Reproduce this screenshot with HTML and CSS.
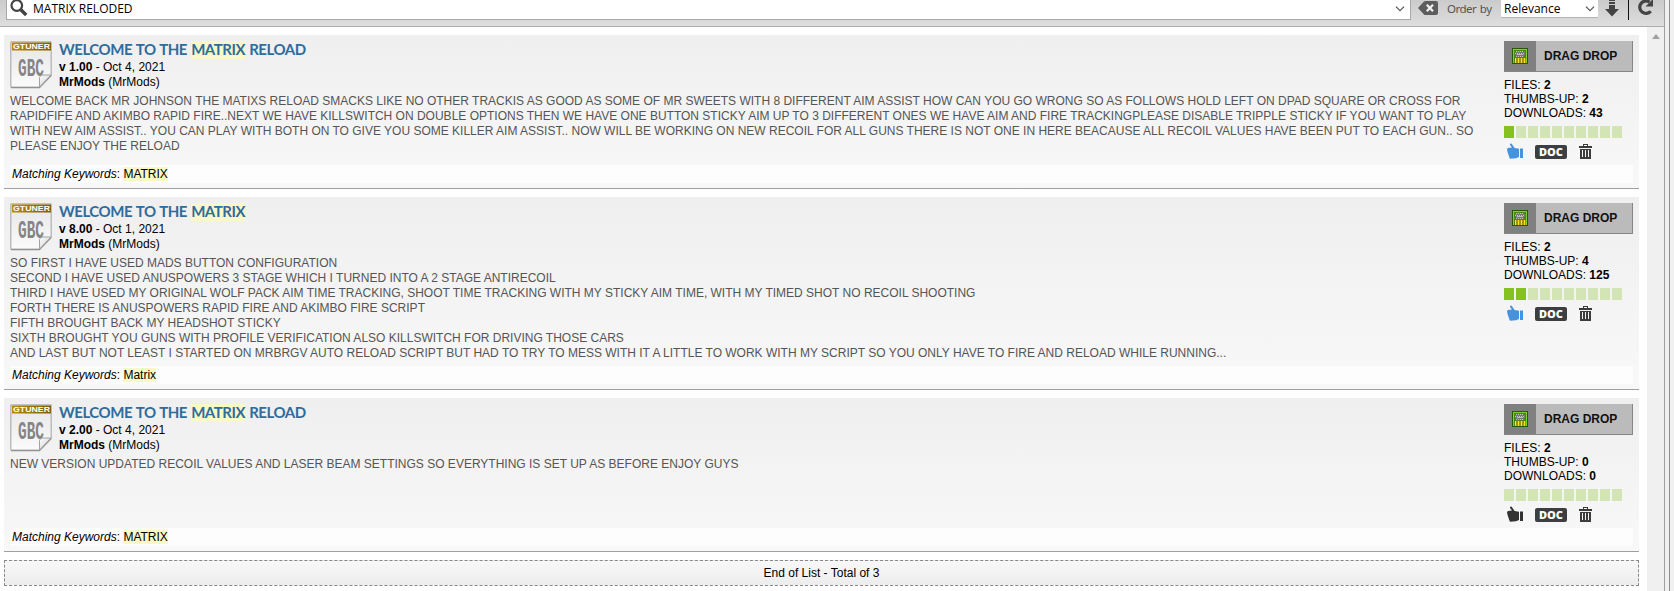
FILE: index.html
```html
<!DOCTYPE html>
<html lang="en">
<head>
<meta charset="utf-8">
<title>Library</title>
<link rel="stylesheet" href="styles.css">
</head>
<body>
<svg class="defs" width="0" height="0">
  <defs>
    <linearGradient id="paper" x1="0" y1="0" x2="0" y2="1"><stop offset="0" stop-color="#e6e6e8"/><stop offset="1" stop-color="#fbfbfb"/></linearGradient>
    <linearGradient id="gold" x1="0" y1="0" x2="1" y2="0"><stop offset="0" stop-color="#b98a0c"/><stop offset="1" stop-color="#7d6200"/></linearGradient>
    <linearGradient id="fold" x1="0" y1="0" x2="1" y2="1"><stop offset="0" stop-color="#ffffff"/><stop offset="1" stop-color="#c8c8ca"/></linearGradient>
    <symbol id="gbc" viewBox="0 0 42 48">
      <path d="M.8 1.5Q.8.8 1.5.8H40.500Q41.200.8 41.200 1.500V34L29.500 46.200H1.500Q.8 46.200.8 45.500Z" fill="url(#paper)" stroke="#b4b4b6" stroke-width="1.300"/>
      <path d="M1 46.600H29.500L41.400 34.400" fill="none" stroke="#929295" stroke-width="1.200"/>
      <rect x="2" y="1.500" width="39" height="8" fill="url(#gold)"/>
      <text x="3" y="8" class="gt" textLength="37" lengthAdjust="spacingAndGlyphs">GTUNER</text>
      <text x="8" y="34.500" class="gb" textLength="26" lengthAdjust="spacingAndGlyphs">GBC</text>
      <path d="M29.500 46V36.500Q30 34 33 34H41Z" fill="url(#fold)" stroke="#a2a2a5" stroke-width="1"/>
    </symbol>
    <symbol id="chip" viewBox="0 0 16 16" shape-rendering="crispEdges">
      <rect width="16" height="16" fill="#285800"/><rect x="1" y="1" width="14" height="14" fill="#75d829"/>
      <rect x="2" y="2" width="12" height="13" fill="#4f8412"/>
      <path d="M3 10H14V15H3Z" fill="#9c9410"/>
      <path d="M3.500 10V15M6.500 10V15M9.500 10V15M12.500 10V15" stroke="#ffe51c" stroke-width="1.600"/>
      <path d="M4 3H12V4H13V7H12V9H4V7H3V4H4Z" fill="#777"/>
      <path d="M4 3.500H12M3 5.500H13M4 8.500H12" stroke="#c5c5bd" stroke-dasharray="1 1"/>
      <path d="M5 6.500H11" stroke="#bbb"/>
    </symbol>
    <symbol id="thumb" viewBox="0 0 16 16">
      <path d="M3.200.7Q4.500.1 5.200 1.500L7.600 5L12 5.800V14L9 15.200L3 15.800L2.100 13.800L1.400 11.500L.6 9.200L0 6.300L.9 5L5 4.600L3 2Z"/><path d="M13 5.500H16V15H13Z"/>
    </symbol>
    <symbol id="trash" viewBox="0 0 13 15" shape-rendering="crispEdges">
      <path d="M4 2V0H9V2H13V4H0V2ZM5 1V2H8V1ZM1 5H12V15H1ZM3 6V13H4V6ZM6 6V13H7V6ZM9 6V13H10V6Z" fill-rule="evenodd"/>
    </symbol>
    <symbol id="chev" viewBox="0 0 10 6"><path d="M1 .7L5 4.700L9 .7" fill="none" stroke="#555" stroke-width="1.200"/></symbol>
  </defs>
</svg>
<div class="window">
  <div class="panel">
    <header class="toolbar">
      <div class="search">
        <svg class="lens" width="18" height="17" viewBox="0 0 18 17"><circle cx="6.800" cy="5.500" r="5.300" fill="none" stroke="#444" stroke-width="2.200"/><path d="M10.600 9.500L16.200 15" stroke="#444" stroke-width="3.400"/></svg>
        <span class="query">MATRIX RELODED</span>
        <svg class="chev" width="10" height="6"><use href="#chev"/></svg>
      </div>
      <svg class="clear" width="20" height="14" viewBox="0 0 20 14"><path d="M0 7L6 .6Q6.500 0 7.500 0H18Q20 0 20 2V12Q20 14 18 14H7.500Q6.500 14 6 13.400Z" fill="#5d5d5d"/><path d="M8.800 3.800L15 10.200M15 3.800L8.800 10.200" stroke="#f2f2f2" stroke-width="2.200"/></svg>
      <span class="order">Order by</span>
      <div class="select"><span>Relevance</span><svg width="10" height="6"><use href="#chev"/></svg></div>
      <svg class="down" width="14" height="18" viewBox="0 0 14 18"><path d="M4 0H10V2H4ZM4 3H10V5H4ZM4 6H10V10H14L7 17.500L0 10H4Z" fill="#444"/></svg>
      <i class="sep"></i>
      <svg class="reload" width="18" height="17" viewBox="0 0 18 17"><path d="M12.500 2.100A6.200 6.200 0 1 0 13.700 11.200" fill="none" stroke="#444" stroke-width="3.200"/><path d="M16 -1V6.500H8.500Z" fill="#444"/></svg>
    </header>
    <div class="content">
      <main class="list">
        <article class="card">
          <div class="body">
            <div class="head"><svg width="42" height="48"><use href="#gbc"/></svg><div><h2><span class="t1">WELCOME TO THE </span><mark>MATRIX</mark> RELOAD</h2><p><b>v 1.00</b> - Oct 4, 2021</p><p><b>MrMods</b> (MrMods)</p></div></div>
            <p class="desc">WELCOME BACK MR JOHNSON THE MATIXS RELOAD SMACKS LIKE NO OTHER TRACKIS AS GOOD AS SOME OF MR SWEETS WITH 8 DIFFERENT AIM ASSIST HOW CAN YOU GO WRONG SO AS FOLLOWS HOLD LEFT ON DPAD SQUARE OR CROSS FOR<br>RAPIDFIFE AND AKIMBO RAPID FIRE..NEXT WE HAVE KILLSWITCH ON DOUBLE OPTIONS THEN WE HAVE ONE BUTTON STICKY AIM UP TO 3 DIFFERENT ONES WE HAVE AIM AND FIRE TRACKINGPLEASE DISABLE TRIPPLE STICKY IF YOU WANT TO PLAY<br>WITH NEW AIM ASSIST.. YOU CAN PLAY WITH BOTH ON TO GIVE YOU SOME KILLER AIM ASSIST.. NOW WILL BE WORKING ON NEW RECOIL FOR ALL GUNS THERE IS NOT ONE IN HERE BEACAUSE ALL RECOIL VALUES HAVE BEEN PUT TO EACH GUN.. SO<br>PLEASE ENJOY THE RELOAD</p>
          </div>
          <aside class="side">
            <div class="drag"><span class="grip"><svg width="16" height="16"><use href="#chip"/></svg></span><span class="label">DRAG DROP</span></div>
            <ul class="stats"><li>FILES: <b>2</b></li><li>THUMBS-UP: <b>2</b></li><li>DOWNLOADS: <b>43</b></li></ul>
            <div class="meter"><i class="on"></i><i></i><i></i><i></i><i></i><i></i><i></i><i></i><i></i><i></i></div>
            <div class="actions"><svg class="thumb liked" width="16" height="16"><use href="#thumb"/></svg><span class="doc">DOC</span><svg class="trash" width="13" height="15"><use href="#trash"/></svg></div>
          </aside>
          <div class="keys"><em>Matching Keywords</em>: <mark>MATRIX</mark></div>
        </article>
        <article class="card">
          <div class="body">
            <div class="head"><svg width="42" height="48"><use href="#gbc"/></svg><div><h2><span class="t1">WELCOME TO THE </span><mark>MATRIX</mark></h2><p><b>v 8.00</b> - Oct 1, 2021</p><p><b>MrMods</b> (MrMods)</p></div></div>
            <p class="desc">SO FIRST I HAVE USED MADS BUTTON CONFIGURATION<br>SECOND I HAVE USED ANUSPOWERS 3 STAGE WHICH I TURNED INTO A 2 STAGE ANTIRECOIL<br>THIRD I HAVE USED MY ORIGINAL WOLF PACK AIM TIME TRACKING, SHOOT TIME TRACKING WITH MY STICKY AIM TIME, WITH MY TIMED SHOT NO RECOIL SHOOTING<br>FORTH THERE IS ANUSPOWERS RAPID FIRE AND AKIMBO FIRE SCRIPT<br>FIFTH BROUGHT BACK MY HEADSHOT STICKY<br>SIXTH BROUGHT YOU GUNS WITH PROFILE VERIFICATION ALSO KILLSWITCH FOR DRIVING THOSE CARS<br>AND LAST BUT NOT LEAST I STARTED ON MRBRGV AUTO RELOAD SCRIPT BUT HAD TO TRY TO MESS WITH IT A LITTLE TO WORK WITH MY SCRIPT SO YOU ONLY HAVE TO FIRE AND RELOAD WHILE RUNNING...</p>
          </div>
          <aside class="side">
            <div class="drag"><span class="grip"><svg width="16" height="16"><use href="#chip"/></svg></span><span class="label">DRAG DROP</span></div>
            <ul class="stats"><li>FILES: <b>2</b></li><li>THUMBS-UP: <b>4</b></li><li>DOWNLOADS: <b>125</b></li></ul>
            <div class="meter"><i class="on"></i><i class="on"></i><i></i><i></i><i></i><i></i><i></i><i></i><i></i><i></i></div>
            <div class="actions"><svg class="thumb liked" width="16" height="16"><use href="#thumb"/></svg><span class="doc">DOC</span><svg class="trash" width="13" height="15"><use href="#trash"/></svg></div>
          </aside>
          <div class="keys"><em>Matching Keywords</em>: <mark>Matrix</mark></div>
        </article>
        <article class="card">
          <div class="body">
            <div class="head"><svg width="42" height="48"><use href="#gbc"/></svg><div><h2><span class="t1">WELCOME TO THE </span><mark>MATRIX</mark> RELOAD</h2><p><b>v 2.00</b> - Oct 4, 2021</p><p><b>MrMods</b> (MrMods)</p></div></div>
            <p class="desc">NEW VERSION UPDATED RECOIL VALUES AND LASER BEAM SETTINGS SO EVERYTHING IS SET UP AS BEFORE ENJOY GUYS</p>
          </div>
          <aside class="side">
            <div class="drag"><span class="grip"><svg width="16" height="16"><use href="#chip"/></svg></span><span class="label">DRAG DROP</span></div>
            <ul class="stats"><li>FILES: <b>2</b></li><li>THUMBS-UP: <b>0</b></li><li>DOWNLOADS: <b>0</b></li></ul>
            <div class="meter"><i></i><i></i><i></i><i></i><i></i><i></i><i></i><i></i><i></i><i></i></div>
            <div class="actions"><svg class="thumb" width="16" height="16"><use href="#thumb"/></svg><span class="doc">DOC</span><svg class="trash" width="13" height="15"><use href="#trash"/></svg></div>
          </aside>
          <div class="keys"><em>Matching Keywords</em>: <mark>MATRIX</mark></div>
        </article>
        <footer class="end">End of List - Total of 3</footer>
      </main>
      <div class="scroll"><svg width="8" height="5" viewBox="0 0 8 5"><path d="M4 0L8 5H0Z" fill="#a0a0a0"/></svg></div>
    </div>
  </div>
  <div class="edge"></div>
</div>
</body>
</html>
```

FILE: styles.css
```css
* { box-sizing: border-box; }
body { margin: 0; background: #f0f0f0; font: 12px/15px "Liberation Sans", Arial, sans-serif; color: #000; }
svg { display: block; flex: none; }
.defs { position: absolute; }
p, h2, ul { margin: 0; padding: 0; }
mark { background: #f9f9c8; color: inherit; }
.window { display: flex; height: 591px; overflow: hidden; }
.panel { width: 1665px; display: flex; flex-direction: column; border-right: 1px solid #a0a0a0; }
.edge { width: 5px; border-right: 1px solid #8e8e8e; }
.toolbar { display: flex; align-items: flex-start; height: 27px; flex: none; border-bottom: 1px solid #adadad; background: linear-gradient(#cbcbcb, #dedede); padding-left: 6px; font-family: "Open Sans", "Noto Sans", sans-serif; }
.search { width: 1405px; height: 20px; background: #fff; border: 1px solid #a8a8a8; border-top: 0; display: flex; padding-left: 3px; }
.query { margin-left: 5px; line-height: 17px; flex: 1; }
.search .chev { margin: 6px 5px 0 0; }
.clear { margin: 1px 0 0 7px; }
.order { margin-left: 9px; width: 54px; line-height: 17px; color: #555; white-space: nowrap; font-family: "Noto Sans", sans-serif; font-size: 11.5px; letter-spacing: -.6px; word-spacing: 1px; letter-spacing: -.5px; }
.select { width: 97px; height: 18px; background: #fff; border-bottom: 1px solid #b4b4b4; display: flex; justify-content: space-between; padding: 0 3px; line-height: 17px; }
.select svg { margin-top: 6px; }
.down { margin-left: 7px; margin-top: -1px; }
.sep { width: 1px; height: 20px; background: #111; margin-left: 9px; }
.reload { margin-left: 8px; }
.content { flex: 1; display: flex; background: #fff; min-height: 0; }
.list { width: 1647px; padding: 8px 8px 0 4px; display: flex; flex-direction: column; gap: 8px; }
.scroll { flex: 1; background: #f0f0f0; display: flex; justify-content: center; padding-top: 7px; }
.card { flex: none; min-height: 154px; padding: 6px 6px 5px; display: grid; grid-template-columns: 1fr 129px; grid-template-rows: 1fr 18px; row-gap: 5px; border-bottom: 1px solid #a0a0a0; background: linear-gradient(#efefef, #f8f8f8); }
.head { display: flex; gap: 7px; height: 53px; }
h2 { font: bold 15px/17px Lato, "Open Sans", sans-serif; letter-spacing: -.48px; word-spacing: 1px; color: #2e6c9d; white-space: pre; margin-bottom: 2px; height: 17px; }
h2 mark { display: inline-block; height: 18px; }
.desc { color: #555; white-space: nowrap; }
.drag { display: flex; height: 31px; background: #bbb; border: solid #868686; border-width: 0 1px 1px 0; }
.grip { width: 32px; background: #808080; display: flex; align-items: center; justify-content: center; }
.label { font-weight: bold; color: #111; line-height: 30px; padding-left: 8px; white-space: nowrap; }
.stats { list-style: none; line-height: 14px; margin-top: 6px; }
.meter { display: flex; gap: 2px; margin-top: 6px; }
.meter i { width: 10px; height: 12px; background: #d3e5b5; }
.meter .on { background: #85c220; }
.actions { display: flex; align-items: flex-start; margin: 5px 0 0 3px; }
.thumb { fill: #333; }
.liked { fill: #4593de; }
.doc { width: 32px; height: 14px; margin: 2px 12px 0; border-radius: 2px; background: #3d3e41; color: #fff; font: 900 11px/14px "Open Sans", sans-serif; text-align: center; }
.trash { margin-top: 1px; fill: #3c3c3c; }
.keys { grid-column: 1 / -1; background: #fdfdfd; padding-left: 2px; line-height: 18px; height: 18px; }
.end { height: 26px; flex: none; border: 1px dashed #888; background: linear-gradient(#f8f8f8, #ededed); text-align: center; line-height: 24px; }
.gt { font: bold 7px "Liberation Sans", sans-serif; fill: #fff; }
.gb { font: bold 25px "Liberation Mono", monospace; fill: #858588; }
```
